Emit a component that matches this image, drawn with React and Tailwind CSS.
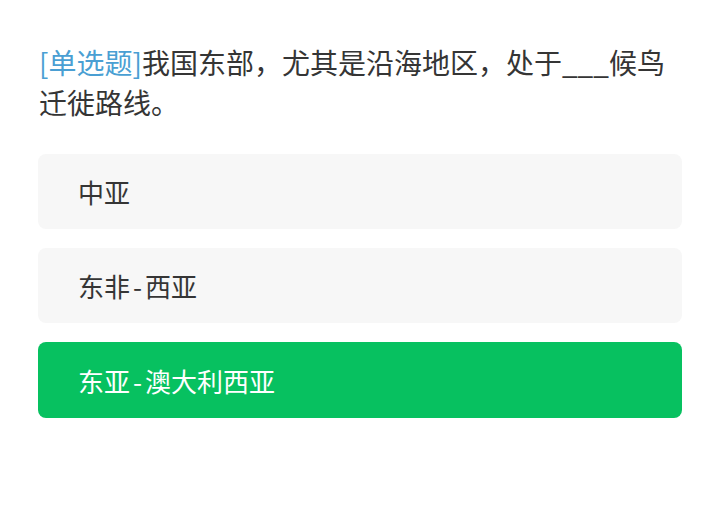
const options = [
  { id: 'a', text: '中亚' },
  { id: 'b', text: '东非-西亚' },
  { id: 'c', text: '东亚-澳大利西亚' },
];

// the hyphen in the reference sits wider than the CJK font's own
function OptionText({ text }) {
  const parts = text.split('-');
  return (
    <span>
      {parts.map((part, i) => (
        <span key={i}>
          {i > 0 && <span className="px-[3px]">-</span>}
          {part}
        </span>
      ))}
    </span>
  );
}

export default function App() {
  const selected = 'c';

  return (
    <div
      className="w-[720px] h-[509px] bg-white px-[38px] pt-[42px]"
      style={{ fontFamily: '"Noto Sans CJK SC", "Noto Sans", sans-serif' }}
    >
      <p className="pl-px text-[28px] leading-[40px] text-[#353535]">
        <span className="text-[#4a9fd3]">[单选题]</span>
        我国东部，尤其是沿海地区，处于___候鸟迁徙路线。
      </p>

      <div className="mt-[32px] flex flex-col gap-[19px]">
        {options.map((opt) => {
          const active = opt.id === selected;
          return (
            <div
              key={opt.id}
              className={
                active
                  ? 'flex h-[76px] items-center rounded-lg bg-[#07c160] px-[40px] text-[26px] text-white'
                  : 'flex h-[75px] items-center rounded-lg bg-[#f7f7f7] px-[40px] text-[26px] text-[#353535]'
              }
            >
              <OptionText text={opt.text} />
            </div>
          );
        })}
      </div>
    </div>
  );
}
